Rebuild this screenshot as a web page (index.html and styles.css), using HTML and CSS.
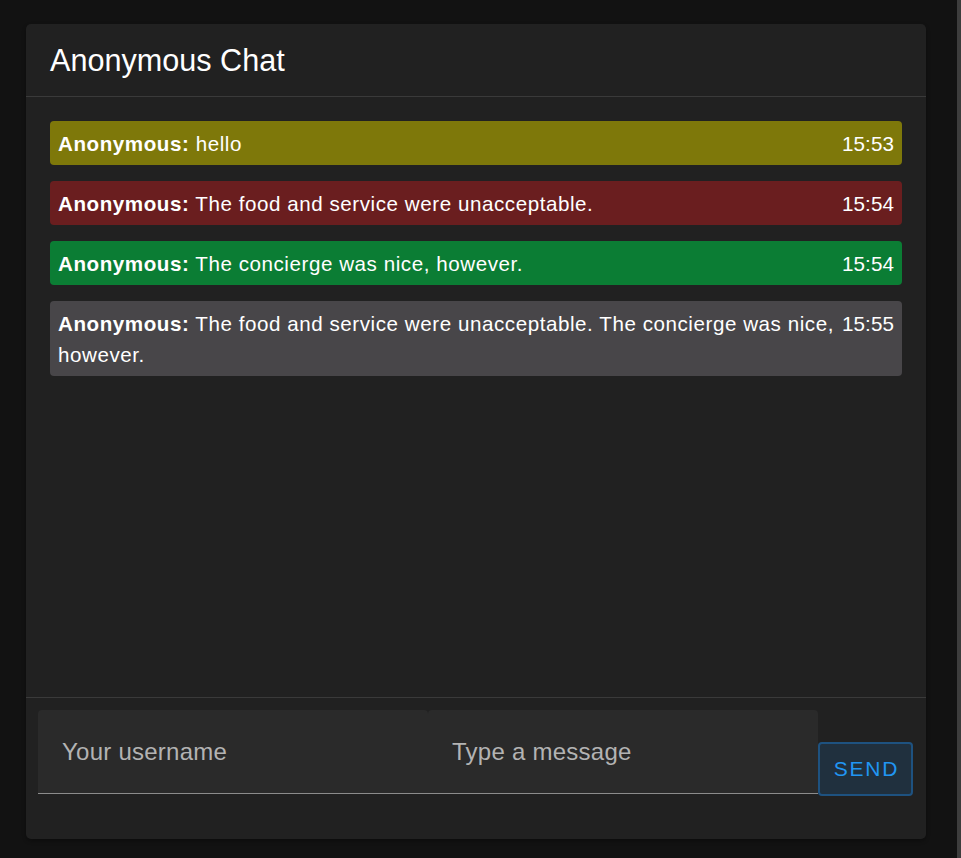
FILE: index.html
```html
<!DOCTYPE html>
<html lang="en">
<head>
<meta charset="utf-8">
<title>Anonymous Chat</title>
<link rel="stylesheet" href="styles.css">
</head>
<body>
<div class="page">
  <main class="stage">
    <section class="chat">
      <header class="chat-header">
        <h1 class="chat-title">Anonymous Chat</h1>
      </header>
      <div class="messages">
        <div class="msg msg-olive">
          <p class="msg-text"><strong>Anonymous:</strong> hello</p>
          <span class="msg-time">15:53</span>
        </div>
        <div class="msg msg-red">
          <p class="msg-text"><strong>Anonymous:</strong> The food and service were unacceptable.</p>
          <span class="msg-time">15:54</span>
        </div>
        <div class="msg msg-green">
          <p class="msg-text"><strong>Anonymous:</strong> The concierge was nice, however.</p>
          <span class="msg-time">15:54</span>
        </div>
        <div class="msg msg-grey">
          <p class="msg-text"><strong>Anonymous:</strong> The food and service were unacceptable. The concierge was nice, however.</p>
          <span class="msg-time">15:55</span>
        </div>
      </div>
      <form class="composer">
        <input class="field" type="text" placeholder="Your username">
        <input class="field" type="text" placeholder="Type a message">
        <button class="send" type="button">Send</button>
      </form>
    </section>
  </main>
  <div class="scrollbar"><div class="scrollbar-thumb"></div></div>
</div>
</body>
</html>
```
FILE: styles.css
```css
html, body {
  margin: 0;
  padding: 0;
  background: #121212;
  font-family: "Liberation Sans", Arial, sans-serif;
  color: #ffffff;
}

.page {
  display: flex;
  min-height: 858px;
}

.stage {
  flex: 1;
  display: flex;
  justify-content: center;
  align-items: flex-start;
  padding-top: 24px;
}

.scrollbar {
  width: 9px;
  display: flex;
  justify-content: flex-end;
}

.scrollbar-thumb {
  width: 4px;
  background: #3d3d3d;
}

.chat {
  width: 900px;
  background: #212121;
  border-radius: 5px;
  display: flex;
  flex-direction: column;
  box-shadow: 0 2px 4px rgba(0, 0, 0, 0.3);
}

.chat-header {
  padding: 17.5px 24px;
  border-bottom: 1px solid #3a3a3a;
}

.chat-title {
  margin: 0;
  font-size: 30.6px;
  line-height: 37px;
  font-weight: 400;
  color: #ffffff;
}

.messages {
  height: 600px;
  box-sizing: border-box;
  padding: 24px;
  display: flex;
  flex-direction: column;
  gap: 16px;
  overflow: auto;
}

.msg {
  display: flex;
  align-items: flex-start;
  justify-content: space-between;
  gap: 8px;
  padding: 6.5px 8px;
  border-radius: 4px;
  font-size: 20.6px;
  line-height: 31px;
}

.msg-text {
  margin: 0;
  flex: 1;
  letter-spacing: 0.55px;
}

.msg-text strong {
  font-weight: 700;
}

.msg-time {
  flex: none;
  letter-spacing: 0.1px;
}

.msg-olive { background: #7e780a; }
.msg-red { background: #6a1e1f; }
.msg-green { background: #0b7d34; }
.msg-grey { background: #484649; }

.composer {
  display: flex;
  align-items: flex-start;
  border-top: 1px solid #3a3a3a;
  padding: 12px 12px 43px 12px;
  margin: 0;
}

.field {
  flex: 0 0 390px;
  box-sizing: border-box;
  height: 84px;
  margin: 0;
  padding: 0 24px;
  border: none;
  border-bottom: 1px solid #8c8c8c;
  border-radius: 4px 4px 0 0;
  background: #2a2a2a;
  color: #ffffff;
  font-family: "Liberation Sans", Arial, sans-serif;
  font-size: 24px;
  letter-spacing: 0.25px;
  outline: none;
}

.field::placeholder {
  color: #b3b3b3;
  opacity: 1;
}

.send {
  flex: none;
  box-sizing: border-box;
  width: 95px;
  height: 54px;
  margin-top: 32px;
  border: 2.5px solid #1e5280;
  border-radius: 4px;
  background: #20303e;
  color: #2196f3;
  font-family: "Liberation Sans", Arial, sans-serif;
  font-size: 21px;
  letter-spacing: 1.8px;
  text-transform: uppercase;
  padding: 0 0 0 2px;
  cursor: pointer;
}
```
